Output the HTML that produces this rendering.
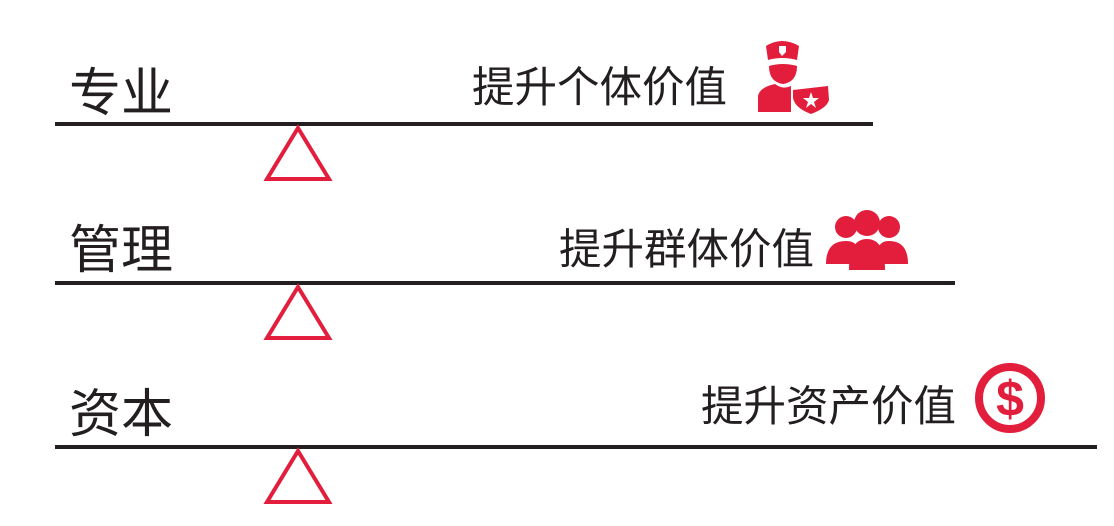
<!DOCTYPE html><html><head><meta charset="utf-8"><style>
body{margin:0;width:1114px;height:526px;background:#fff;position:relative;overflow:hidden;font-family:"Liberation Sans","Noto Sans CJK SC",sans-serif;color:#231f20}
.l{position:absolute;height:4px;background:#231f20;left:55px}
.big{position:absolute;font-size:52px;line-height:1;left:69px}
.sm{position:absolute;font-size:42.5px;line-height:1}
svg{position:absolute}
</style></head><body>
<div class="big" style="top:68px">专业</div>
<div class="big" style="top:225px">管理</div>
<div class="big" style="top:389px">资本</div>
<div class="sm" style="left:472px;top:68px">提升个体价值</div>
<div class="sm" style="left:559px;top:230px">提升群体价值</div>
<div class="sm" style="left:701px;top:387px">提升资产价值</div>
<div class="l" style="top:122px;width:818px"></div>
<div class="l" style="top:281px;width:900px"></div>
<div class="l" style="top:445px;width:1042px"></div>
<svg width="1114" height="526" style="left:0;top:0">
<g fill="none" stroke="#e31e3c" stroke-width="4">
<polygon points="298,128 329,179 267,179"/>
<polygon points="298,287 329,338 267,338"/>
<polygon points="298,451 329,502 267,502"/>
</g>
<g fill="#e31e3c">
<path d="M766,46 Q782,36 799,46 L797,60 Q782,56 768,60Z"/>
<path d="M769,66 Q783,62 797,66 Q797,82 783,84 Q769,82 769,66Z"/>
<path d="M758,112 L758,96 Q760,87 775,84 Q783,90 791,86 L791,112Z"/>
<path d="M793,90 L828,86 L829,100 Q827,108 811,114 Q795,108 793,98Z"/>
<circle cx="846" cy="227" r="11"/><circle cx="867" cy="223" r="13"/><circle cx="889" cy="227" r="11"/>
<path d="M826,264 Q826,241 846,241 Q856,241 858,249 L858,264Z"/>
<path d="M878,264 L878,249 Q880,241 889,241 Q908,241 908,264Z"/>
<path d="M849,270 Q849,239 867,239 Q885,239 885,270Z"/>
</g>
<g fill="#fff"><path d="M779,46 L786,46 L786,52 L782,56 L779,52Z"/><polygon points="811,92 813,98 819,98 814,102 816,108 811,104 806,108 808,102 803,98 809,98"/></g>
<circle cx="1010" cy="398" r="31" fill="none" stroke="#e31e3c" stroke-width="8"/>
<text x="1010" y="416" font-size="50" fill="#e31e3c" text-anchor="middle" font-family="Liberation Sans" font-weight="bold">$</text>
</svg>
</body></html>
